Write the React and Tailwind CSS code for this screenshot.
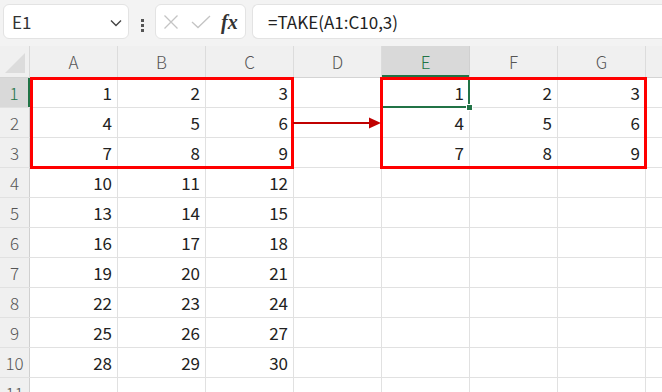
import React from "react";

const cols = ["A", "B", "C", "D", "E", "F", "G", "H"];
const font = { fontFamily: '"Noto Sans CJK JP", "Noto Sans", sans-serif' };

function cellValue(r, c) {
  if (r <= 10 && c < 3) return (r - 1) * 3 + c + 1;
  if (r <= 3 && c >= 4 && c <= 6) return (r - 1) * 3 + (c - 4) + 1;
  return "";
}

export default function App() {
  const rows = Array.from({ length: 11 }, (_, i) => i + 1);
  return (
    <div className="relative w-[662px] h-[392px] overflow-hidden bg-white text-[#222]" style={font}>
      {/* toolbar */}
      <div className="flex h-[46px] bg-[#f3f3f3] pt-[4px] pl-[3px]">
        <div className="flex h-[35px] w-[126px] items-center justify-between rounded-[6px] border border-[#e3e3e3] bg-white pl-[8px] pr-[6px]">
          <span className="text-[17px] text-[#333]">E1</span>
          <svg width="12" height="8" viewBox="0 0 12 8" className="mt-[2px]">
            <path d="M1 1.5 L6 6.5 L11 1.5" fill="none" stroke="#444" strokeWidth="1.4" />
          </svg>
        </div>
        <div className="flex w-[26px] flex-col items-center justify-center gap-[2px]">
          <div className="h-[3px] w-[3px] bg-[#555]" />
          <div className="h-[3px] w-[3px] bg-[#555]" />
          <div className="h-[3px] w-[3px] bg-[#555]" />
        </div>
        <div className="flex h-[35px] w-[91px] items-center rounded-[6px] border border-[#e3e3e3] bg-white pl-[7px]">
          <svg width="16" height="16" viewBox="0 0 16 16">
            <path d="M1.5 1.5 L14.5 14.5 M14.5 1.5 L1.5 14.5" stroke="#c4c4c4" strokeWidth="1.3" />
          </svg>
          <svg width="20" height="14" viewBox="0 0 20 14" className="ml-[12px]">
            <path d="M1 7 L7 12.5 L19 1" fill="none" stroke="#c4c4c4" strokeWidth="1.3" />
          </svg>
          <span
            className="ml-[10px] text-[20px] font-bold italic text-[#333]"
            style={{ fontFamily: '"Liberation Serif", serif' }}
          >
            fx
          </span>
        </div>
        <div className="ml-[6px] flex h-[35px] flex-1 items-center rounded-l-[6px] border border-r-0 border-[#e3e3e3] bg-white pl-[15px]">
          <span className="text-[17px] text-[#222]">=TAKE(A1:C10,3)</span>
        </div>
      </div>

      {/* column header */}
      <div className="flex h-[32px] border-b border-[#d4d4d4] bg-[#f0f0f0]">
        <div className="relative w-[30px] shrink-0 border-r border-[#d9d9d9]">
          <svg width="22" height="22" viewBox="0 0 22 22" className="absolute bottom-[3px] right-[3px]">
            <path d="M21 1 L21 21 L1 21 Z" fill="#dcdcdc" />
          </svg>
        </div>
        {cols.map((c) => (
          <div
            key={c}
            className={
              "flex w-[88px] shrink-0 items-center justify-center border-r text-[17px] font-light " +
              (c === "E"
                ? "border-[#d0d0d0] bg-[#d9d9d9] text-[#217346] shadow-[inset_0_-2px_0_#217346]"
                : "border-[#dcdcdc] text-[#555]")
            }
          >
            {c === "H" ? "" : c}
          </div>
        ))}
      </div>

      {/* rows */}
      {rows.map((r) => (
        <div key={r} className="flex h-[30px] border-b border-[#e1e1e1]">
          <div
            className={
              "flex w-[30px] shrink-0 items-center justify-center border-r text-[17px] font-light " +
              (r === 1
                ? "border-[#217346] border-r-2 bg-[#d9d9d9] text-[#217346]"
                : "border-[#d0d0d0] bg-[#f0f0f0] text-[#555]")
            }
          >
            {r}
          </div>
          {cols.map((c, ci) => (
            <div
              key={c}
              className="flex w-[88px] shrink-0 items-center justify-end border-r border-[#e1e1e1] pr-[5px] text-[17px] text-[#222]"
            >
              {cellValue(r, ci)}
            </div>
          ))}
        </div>
      ))}

      {/* selection E1 */}
      <div className="absolute left-[381px] top-[77px] h-[31px] w-[89px] border-b-2 border-r-2 border-[#217346]" />
      <div className="absolute left-[467px] top-[105px] h-[5px] w-[5px] bg-[#217346] ring-1 ring-white" />

      {/* red boxes */}
      <div className="absolute left-[30px] top-[77px] h-[92px] w-[264px] border-[3px] border-[#ff0000]" />
      <div className="absolute left-[380px] top-[77px] h-[92px] w-[267px] border-[3px] border-[#ff0000]" />

      {/* arrow */}
      <svg className="absolute left-[293px] top-[116px]" width="90" height="14" viewBox="0 0 90 14">
        <path d="M0 7 L78 7" stroke="#c00000" strokeWidth="2" />
        <path d="M76 1.5 L88 7 L76 12.5 Z" fill="#c00000" />
      </svg>
    </div>
  );
}
